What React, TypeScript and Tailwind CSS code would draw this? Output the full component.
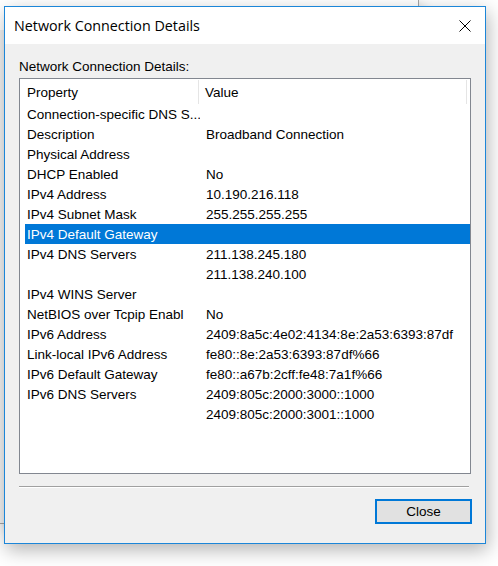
import { useState } from "react";

type Row = {
  name: string;
  value: string;
};

const rows: Row[] = [
  { name: "Connection-specific DNS S...", value: "" },
  { name: "Description", value: "Broadband Connection" },
  { name: "Physical Address", value: "" },
  { name: "DHCP Enabled", value: "No" },
  { name: "IPv4 Address", value: "10.190.216.118" },
  { name: "IPv4 Subnet Mask", value: "255.255.255.255" },
  { name: "IPv4 Default Gateway", value: "" },
  { name: "IPv4 DNS Servers", value: "211.138.245.180" },
  { name: "", value: "211.138.240.100" },
  { name: "IPv4 WINS Server", value: "" },
  { name: "NetBIOS over Tcpip Enabl", value: "No" },
  { name: "IPv6 Address", value: "2409:8a5c:4e02:4134:8e:2a53:6393:87df" },
  { name: "Link-local IPv6 Address", value: "fe80::8e:2a53:6393:87df%66" },
  { name: "IPv6 Default Gateway", value: "fe80::a67b:2cff:fe48:7a1f%66" },
  { name: "IPv6 DNS Servers", value: "2409:805c:2000:3000::1000" },
  { name: "", value: "2409:805c:2000:3001::1000" },
];

function CloseGlyph() {
  return (
    <svg width="12" height="12" viewBox="0 0 12 12" className="block">
      <path
        d="M0.5 0.5 L11.5 11.5 M11.5 0.5 L0.5 11.5"
        stroke="#000"
        strokeWidth="1"
        fill="none"
      />
    </svg>
  );
}

export default function App() {
  const [selected, setSelected] = useState(6);

  return (
    <div className="relative w-[498px] h-[566px] overflow-hidden bg-white font-['Liberation_Sans',Arial,sans-serif] text-[13.5px] text-black">
      {/* window behind the dialog */}
      <div className="absolute left-0 top-0 w-[419px] h-[524px] flex flex-col border-r border-b border-[#a3a3a3] bg-[#f0f0f0] shadow-[3px_4px_12px_rgba(0,0,0,0.18)]">
        <div className="h-[30px] bg-white" />
      </div>

      {/* dialog */}
      <div className="absolute left-[4px] top-[6px] w-[482px] h-[538px] flex flex-col border border-[#1c86d8] bg-[#f0f0f0] shadow-[2px_6px_18px_rgba(0,0,0,0.3)]">
        {/* title bar */}
        <div className="h-[37px] shrink-0 flex items-center justify-between bg-white pl-[9px] pr-[14px]">
          <span className="pt-[2px] font-['Open_Sans','Noto_Sans',sans-serif] text-[14.3px] leading-none text-black">
            Network Connection Details
          </span>
          <CloseGlyph />
        </div>

        <div className="flex-1 flex flex-col px-[14px] pt-[15px]">
          <div className="h-[16px] leading-[16px]">Network Connection Details:</div>

          {/* list view */}
          <div className="mt-[3px] h-[396px] flex flex-col border border-[#828790] bg-white">
            <div className="h-[25px] shrink-0 flex items-stretch pt-px">
              <div className="w-[179px] pl-[7px] pt-px leading-[23px] border-r border-[#e5e5e5]">Property</div>
              <div className="w-[268px] pl-[6px] pt-px leading-[23px] border-r border-[#e5e5e5]">Value</div>
            </div>
            <div className="flex flex-col pl-[5px]">
              {rows.map((r, i) => (
                <div
                  key={i}
                  onClick={() => setSelected(i)}
                  className={
                    "h-[20px] flex pt-px leading-[19px] whitespace-nowrap " +
                    (i === selected ? "bg-[#0078d7] text-white" : "")
                  }
                >
                  <div className="w-[175px] pl-[2px] overflow-hidden">{r.name}</div>
                  <div className="pl-[6px]">{r.value}</div>
                </div>
              ))}
            </div>
          </div>

          {/* separator */}
          <div className="mt-[12px] mr-[2px] h-[2px] flex flex-col">
            <div className="h-px bg-[#a0a0a0]" />
            <div className="h-px bg-white" />
          </div>

          <div className="mt-[11px] flex justify-end -mr-px">
            <button className="w-[97px] h-[25px] border-2 border-[#0078d7] bg-[#e1e1e1] leading-[21px] text-center">
              Close
            </button>
          </div>
        </div>
      </div>
    </div>
  );
}
